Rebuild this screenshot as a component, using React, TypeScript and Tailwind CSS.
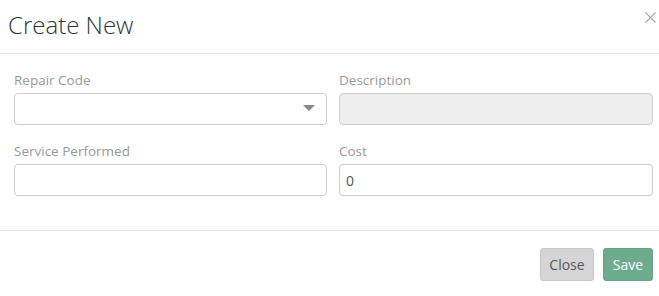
import React from "react";

export default function App() {
  const font = { fontFamily: '"Open Sans", "Liberation Sans", sans-serif' };
  return (
    <div className="w-[659px] h-[296px] bg-white overflow-hidden" style={font}>
      <div className="relative h-[54px] border-b border-[#e5e5e5] pl-[8px] pt-[8px]">
        <h4 className="text-[24px] font-light text-[#333] leading-[34px]">Create New</h4>
        <button className="absolute right-[3px] top-[12px] w-[11px] h-[11px] text-[#aaa]">
          <svg viewBox="0 0 11 11" width="11" height="11" stroke="currentColor" strokeWidth="1.1" fill="none">
            <path d="M0.5 0.5 L10.5 10.5 M10.5 0.5 L0.5 10.5" />
          </svg>
        </button>
      </div>
      <div className="pl-[14px] pr-[6px] pt-[17px] grid grid-cols-[313px_314px] gap-x-[12px] gap-y-[17px]">
        <div>
          <label className="block text-[13.5px] leading-[18px] text-[#999] mb-[4px]">Repair Code</label>
          <div className="relative h-[32px] border border-[#ccc] rounded-[4px] bg-white">
            <svg className="absolute right-[11px] top-[11px]" width="12" height="6" viewBox="0 0 12 6">
              <path d="M0 0 L12 0 L6 6 Z" fill="#888" />
            </svg>
          </div>
        </div>
        <div>
          <label className="block text-[13.5px] leading-[18px] text-[#999] mb-[4px]">Description</label>
          <div className="h-[32px] border border-[#ccc] rounded-[4px] bg-[#eeeeee]" />
        </div>
        <div>
          <label className="block text-[13.5px] leading-[18px] text-[#999] mb-[4px]">Service Performed</label>
          <div className="h-[32px] border border-[#ccc] rounded-[4px] bg-white" />
        </div>
        <div>
          <label className="block text-[13.5px] leading-[18px] text-[#999] mb-[4px]">Cost</label>
          <div className="h-[32px] border border-[#ccc] rounded-[4px] bg-white px-[6px] flex items-center text-[14px] text-[#555]">0</div>
        </div>
      </div>
      <div className="mt-[34px] border-t border-[#e5e5e5] flex justify-end gap-[9px] pr-[6px] pt-[17px]">
        <button className="h-[33px] w-[54px] rounded-[3px] bg-[#d5d5d5] border border-[#c8c8c8] text-[14px] text-[#555]">Close</button>
        <button className="h-[33px] w-[50px] rounded-[3px] bg-[#6dab8d] border border-[#66a386] text-[14px] text-white">Save</button>
      </div>
    </div>
  );
}
